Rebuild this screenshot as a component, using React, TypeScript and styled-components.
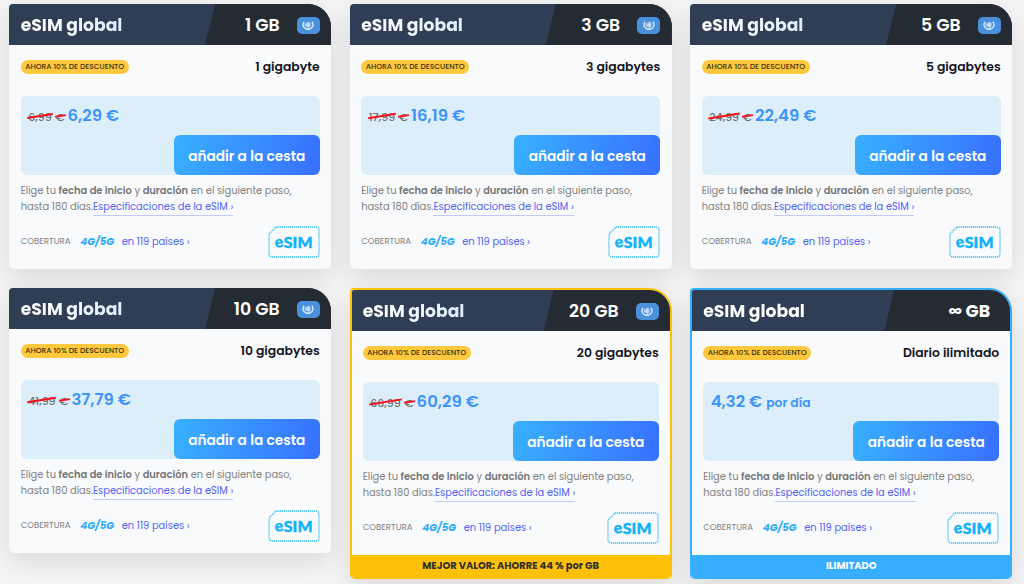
// App.tsx
import React from 'react';
import styled, { createGlobalStyle } from 'styled-components';

const GlobalStyle = createGlobalStyle`
  * {
    box-sizing: border-box;
  }

  body {
    margin: 0;
    height: 584px;
    overflow: hidden;
    background-color: #f4f4f4;
    font-family: Poppins, Inter, 'Liberation Sans', sans-serif;
    font-feature-settings: 'cv11';
  }
`;

const Grid = styled.main`
  display: grid;
  grid-template-columns: repeat(3, 322px);
  grid-template-rows: 265px 291px;
  align-items: start;
  gap: 19px 18.5px;
  padding: 4px 0 0 9.2px;
`;

const Card = styled.article<{ $accent?: string }>`
  overflow: hidden;
  border: ${({ $accent }) => ($accent ? `2px solid ${$accent}` : 'none')};
  border-bottom: none;
  border-radius: 4px 23px 5px 5px;
  background-color: #f9fafc;
  box-shadow: 0 8px 26px rgba(0, 0, 0, 0.11);
`;

const CardHeader = styled.header`
  display: flex;
  justify-content: space-between;
  height: 41px;
  background-color: #2f3d55;
`;

const Title = styled.h2<{ $inset: number; $solid: boolean }>`
  margin: 0;
  padding-left: ${({ $inset }) => $inset}px;
  font-size: 17.2px;
  font-weight: 700;
  line-height: 42px;
  color: transparent;
  background: ${({ $solid }) =>
    $solid ? 'linear-gradient(#ffffff, #ffffff)' : 'linear-gradient(90deg, #ffffff 20%, #dceeff 100%)'};
  background-clip: text;
`;

const Amount = styled.div<{ $inset: number; $bold: boolean }>`
  display: flex;
  align-items: center;
  justify-content: flex-end;
  gap: 17px;
  width: 126px;
  padding: 1px ${({ $inset }) => $inset}px 0 0;
  background-color: #242b33;
  clip-path: polygon(10px 0, 100% 0, 100% 100%, 0 100%);
  color: #ffffff;
  font-size: 17.3px;
  font-weight: ${({ $bold }) => ($bold ? 700 : 600)};
`;

const Flag = styled.span`
  display: flex;
  align-items: center;
  justify-content: center;
  width: 23px;
  height: 17px;
  border-radius: 5px;
  background-color: #4a90dd;
`;

const Body = styled.div<{ $inset: number }>`
  display: flex;
  flex-direction: column;
  height: 224px;
  padding: 14.5px ${({ $inset }) => $inset}px 0;
`;

const SummaryRow = styled.div`
  display: flex;
  justify-content: space-between;
  align-items: center;
  height: 15px;
`;

const Badge = styled.span`
  width: 108px;
  height: 14px;
  border-radius: 7px;
  background-color: #ffc83d;
  color: #3b3214;
  font-size: 7.5px;
  font-weight: 500;
  line-height: 14px;
  text-align: center;
  white-space: nowrap;
`;

const DataSize = styled.strong`
  color: #15151f;
  font-size: 12.4px;
  font-weight: 600;
  line-height: 14px;
`;

const PriceBox = styled.div`
  display: flex;
  flex-direction: column;
  justify-content: space-between;
  height: 79.5px;
  margin-top: 21px;
  border-radius: 6px;
  background-color: #dceef9;
`;

const PriceLine = styled.div`
  display: flex;
  align-items: baseline;
  padding: 9px 0 0 7.5px;
  color: #3d94fb;
  font-size: 16.5px;
  font-weight: 600;
  line-height: 22px;
`;

const OldPrice = styled.span`
  display: flex;
  gap: 4px;
  margin-right: 3px;
  color: #6c7276;
  font-size: 11px;
  font-weight: 500;
`;

const Struck = styled.span`
  position: relative;

  &::after {
    content: '';
    position: absolute;
    top: 9.5px;
    left: -1px;
    right: -1px;
    height: 1.5px;
    background-color: #f8141e;
    transform: rotate(-9deg);
  }
`;

const Unit = styled.span`
  margin-left: 4px;
  font-size: 12.3px;
`;

const CartButton = styled.button`
  align-self: flex-end;
  width: 146px;
  height: 40px;
  padding: 0;
  border: none;
  border-radius: 6px;
  background: linear-gradient(100deg, #38b0ff 0%, #3870ff 100%);
  color: #ffffff;
  font: 600 13.7px / 43px Poppins, Inter, 'Liberation Sans', sans-serif;
  font-feature-settings: 'cv11';
  cursor: pointer;
`;

const Description = styled.p`
  margin: 8px 0 0;
  color: #808182;
  font-size: 9.9px;
  line-height: 15.5px;
  white-space: nowrap;

  b {
    color: #747577;
    font-weight: 600;
  }
`;

const SpecLink = styled.a`
  padding-bottom: 2px;
  border-bottom: 1px solid #c3caf8;
  color: #5263fa;
`;

const CoverageRow = styled.div`
  display: flex;
  align-items: center;
  height: 31px;
  margin-top: 12px;
  font-size: 9.9px;
`;

const CoverageLabel = styled.span`
  width: 59.5px;
  color: #808182;
  font-size: 8.6px;
`;

const Network = styled.span`
  width: 41.5px;
  color: #2eabff;
  font-size: 10.3px;
  font-style: italic;
  font-weight: 700;
`;

const Countries = styled.a`
  flex: 1;
  color: #5263fa;
`;

const Banner = styled.footer<{ $background: string; $color: string }>`
  height: 24px;
  background-color: ${({ $background }) => $background};
  color: ${({ $color }) => $color};
  font-size: 9.9px;
  font-weight: 700;
  line-height: 22px;
  text-align: center;
`;

const EsimText = styled.text`
  fill: #0fb2fb;
  stroke: #0fb2fb;
  stroke-width: 0.4px;
  font-family: Lato, 'Open Sans', sans-serif;
  font-size: 15.8px;
  font-weight: 900;
`;

const UnFlag = () => (
  <Flag>
    <svg width="12" height="11" viewBox="0 0 12 11" fill="none" stroke="#e4f1ff">
      <path d="M3.9 3a2.6 2.6 0 0 0 .4 3.9M5.2 2.5v4.6M6.3 2.2l1.6.9v3.6L6.3 7.3zM4 5h4" strokeWidth="0.9" />
      <path d="M2.2 1.7C.2 4 .5 7.8 4.8 9.3M9.8 1.7c2 2.3 1.7 6.1-2.6 7.6M4.2 9.7L6 8.8l1.8.9" strokeWidth="1.3" />
    </svg>
  </Flag>
);

const EsimLogo = () => (
  <svg width="52" height="32" viewBox="0 0 52 32">
    <path
      d="M8 1h40a3 3 0 0 1 3 3v24a3 3 0 0 1-3 3H4a3 3 0 0 1-3-3V8z"
      fill="none"
      stroke="#39bdfb"
      strokeWidth="1.3"
      strokeDasharray="1.3 0.7"
    />
    <EsimText x="7.5" y="22" textLength="37" lengthAdjust="spacingAndGlyphs">
      <tspan rotate="-10">e</tspan>
      <tspan rotate="0">SIM</tspan>
    </EsimText>
  </svg>
);

interface Plan {
  amount: string;
  size: string;
  price: string;
  oldPrice?: string;
  unit?: string;
  accent?: string;
  banner?: string;
  bannerColor?: string;
}

const plans: Plan[] = [
  { amount: '1 GB', size: '1 gigabyte', oldPrice: '6,99', price: '6,29 €' },
  { amount: '3 GB', size: '3 gigabytes', oldPrice: '17,99', price: '16,19 €' },
  { amount: '5 GB', size: '5 gigabytes', oldPrice: '24,99', price: '22,49 €' },
  { amount: '10 GB', size: '10 gigabytes', oldPrice: '41,99', price: '37,79 €' },
  {
    amount: '20 GB',
    size: '20 gigabytes',
    oldPrice: '66,99',
    price: '60,29 €',
    accent: '#ffc107',
    banner: 'MEJOR VALOR: AHORRE 44 % por GB',
    bannerColor: '#30302c',
  },
  {
    amount: '∞ GB',
    size: 'Diario ilimitado',
    price: '4,32 €',
    unit: 'por día',
    accent: '#37aeff',
    banner: 'ILIMITADO',
    bannerColor: '#ffffff',
  },
];

const PlanCard = ({ plan }: { plan: Plan }) => {
  const inset = plan.accent ? 11 : 11.5;

  return (
    <Card $accent={plan.accent}>
      <CardHeader>
        <Title $inset={inset} $solid={Boolean(plan.unit)}>
          eSIM global
        </Title>
        <Amount $inset={plan.unit ? 20 : inset} $bold={Boolean(plan.unit)}>
          {plan.amount}
          {!plan.unit && <UnFlag />}
        </Amount>
      </CardHeader>
      <Body $inset={inset}>
        <SummaryRow>
          <Badge>AHORA 10% DE DESCUENTO</Badge>
          <DataSize>{plan.size}</DataSize>
        </SummaryRow>
        <PriceBox>
          <PriceLine>
            {plan.oldPrice && (
              <OldPrice>
                <Struck>{plan.oldPrice}</Struck>
                <Struck>€</Struck>
              </OldPrice>
            )}
            {plan.price}
            {plan.unit && <Unit>{plan.unit}</Unit>}
          </PriceLine>
          <CartButton>añadir a la cesta</CartButton>
        </PriceBox>
        <Description>
          Elige tu <b>fecha de inicio</b> y <b>duración</b> en el siguiente paso,
          <br />
          hasta 180 días.<SpecLink>Especificaciones de la eSIM ›</SpecLink>
        </Description>
        <CoverageRow>
          <CoverageLabel>COBERTURA</CoverageLabel>
          <Network>4G/5G</Network>
          <Countries>en 119 países ›</Countries>
          <EsimLogo />
        </CoverageRow>
      </Body>
      {plan.banner && (
        <Banner $background={plan.accent!} $color={plan.bannerColor!}>
          {plan.banner}
        </Banner>
      )}
    </Card>
  );
};

const App = () => {
  return (
    <>
      <GlobalStyle />
      <Grid>
        {plans.map((plan) => (
          <PlanCard key={plan.amount} plan={plan} />
        ))}
      </Grid>
    </>
  );
};

export default App;
